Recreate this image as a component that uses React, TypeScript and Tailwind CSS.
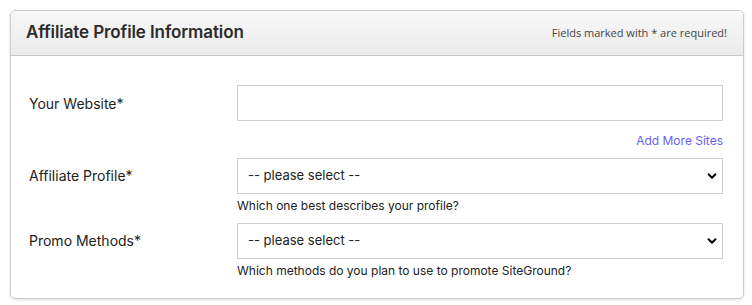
import { ChevronDown } from 'lucide-react'

const inter = { fontFamily: 'Inter, "Liberation Sans", sans-serif' }

function Select() {
  return (
    <div className="relative">
      <select
        className="w-full h-[36px] appearance-none bg-white border border-[#cfcfcf] pl-[10px] pr-8 text-[13px] text-[#222] outline-none"
        style={inter}
        defaultValue=""
      >
        <option value="">-- please select --</option>
      </select>
      <ChevronDown
        size={14}
        strokeWidth={3.5}
        className="absolute right-[4px] top-1/2 -translate-y-1/2 text-black pointer-events-none"
      />
    </div>
  )
}

export default function App() {
  return (
    <div className="w-[752px] h-[305px] bg-white p-[10px] pr-[8px]">
      <div className="border border-[#cccccc] rounded-[5px] shadow-[0_1px_3px_rgba(0,0,0,0.12)] overflow-hidden">
        <div className="h-[45px] flex items-center justify-between pl-[15px] pr-[16px] bg-gradient-to-b from-[#f8f8f8] to-[#ebebeb] border-b border-[#c8c8c8]">
          <h2 className="text-[17px] font-semibold text-[#2b2b2b] tracking-[-0.1px]" style={inter}>
            Affiliate Profile Information
          </h2>
          <span className="text-[11px] text-[#444] pt-[1px]" style={{ fontFamily: '"Open Sans", sans-serif' }}>
            Fields marked with * are required!
          </span>
        </div>

        <div className="pl-[18px] pr-[20px] pt-[29px] pb-[19px] text-[#222]" style={inter}>
          <div className="grid grid-cols-[208px_1fr] items-center">
            <label className="text-[14px]">Your Website*</label>
            <input className="h-[36px] border border-[#cfcfcf] bg-white outline-none px-[10px]" />
          </div>
          <div className="flex justify-end mt-[12px]">
            <a className="text-[12px] text-[#6a5ef7] leading-[16px]">Add More Sites</a>
          </div>

          <div className="grid grid-cols-[208px_1fr] items-start mt-[9px]">
            <label className="text-[14px] leading-[36px]">Affiliate Profile*</label>
            <div>
              <Select />
              <p className="text-[12px] text-[#222] mt-[4px] leading-[16px]">
                Which one best describes your profile?
              </p>
            </div>
          </div>

          <div className="grid grid-cols-[208px_1fr] items-start mt-[9px]">
            <label className="text-[14px] leading-[36px]">Promo Methods*</label>
            <div>
              <Select />
              <p className="text-[12px] text-[#222] mt-[4px] leading-[16px]">
                Which methods do you plan to use to promote SiteGround?
              </p>
            </div>
          </div>
        </div>
      </div>
    </div>
  )
}
